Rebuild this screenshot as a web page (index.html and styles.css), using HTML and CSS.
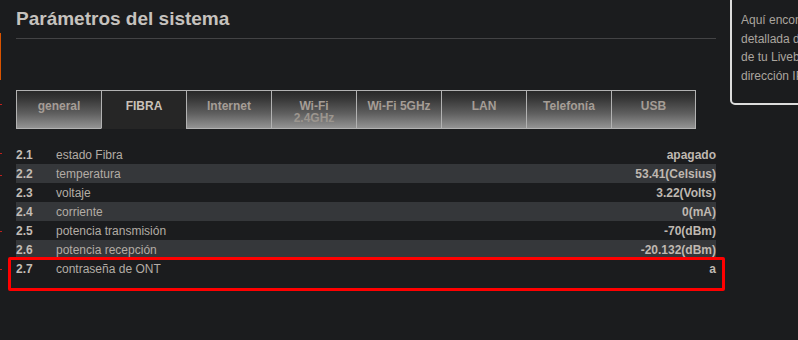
FILE: index.html
```html
<!DOCTYPE html>
<html>
  <head>
    <meta charset="UTF-8">
    <title>Parámetros del sistema</title>
    <link rel="stylesheet" href="styles.css">
  </head>
  <body>
    <div class="edge">
      <div class="edge-bar"></div>
      <div class="tick" style="top: 104px"></div>
      <div class="tick" style="top: 153px"></div>
      <div class="tick" style="top: 175px"></div>
      <div class="tick" style="top: 231px"></div>
      <div class="tick" style="top: 269px"></div>
    </div>

    <div class="page">
      <div class="main">
        <h1>Parámetros del sistema</h1>

        <div class="tabs">
          <div class="tab">general</div>
          <div class="tab active">FIBRA</div>
          <div class="tab">Internet</div>
          <div class="tab">Wi-Fi<br><span class="sub">2.4GHz</span></div>
          <div class="tab">Wi-Fi 5GHz</div>
          <div class="tab">LAN</div>
          <div class="tab">Telefonía</div>
          <div class="tab last">USB</div>
        </div>

        <div class="params">
          <div class="row"><span class="num">2.1</span><span class="label">estado Fibra</span><span class="value">apagado</span></div>
          <div class="row alt"><span class="num">2.2</span><span class="label">temperatura</span><span class="value">53.41(Celsius)</span></div>
          <div class="row"><span class="num">2.3</span><span class="label">voltaje</span><span class="value">3.22(Volts)</span></div>
          <div class="row alt"><span class="num">2.4</span><span class="label">corriente</span><span class="value">0(mA)</span></div>
          <div class="row"><span class="num">2.5</span><span class="label">potencia transmisión</span><span class="value">-70(dBm)</span></div>
          <div class="row alt"><span class="num">2.6</span><span class="label">potencia recepción</span><span class="value">-20.132(dBm)</span></div>
          <div class="row marked"><span class="num">2.7</span><span class="label">contraseña de ONT</span><span class="value">a</span>
            <div class="highlight"></div>
          </div>
        </div>
      </div>

      <div class="sidebar">
        <p>Aquí encontrarás la información<br>detallada de la conexión de fibra<br>de tu Livebox, como la potencia o la<br>dirección IP de tu conexión.</p>
      </div>
    </div>
  </body>
</html>
```

FILE: styles.css
```css
body {
  margin: 0;
  background-color: #1b1c1e;
  font-family: "Liberation Sans", Arial, sans-serif;
  overflow: hidden;
  height: 340px;
  position: relative;
}

.edge {
  position: absolute;
  left: 0;
  top: 0;
}

.edge-bar {
  position: absolute;
  left: 0;
  top: 33px;
  width: 1px;
  height: 47px;
  background-color: #d95300;
}

.tick {
  position: absolute;
  left: 0;
  width: 2px;
  height: 1px;
  background-color: #c0201c;
}

.page {
  display: flex;
  flex-direction: row;
}

.main {
  width: 700px;
  margin-left: 16px;
  flex-shrink: 0;
}

h1 {
  margin: 8px 0 0 0;
  padding-bottom: 8px;
  font-size: 19px;
  line-height: 22px;
  font-weight: bold;
  color: #c6c2be;
  border-bottom: 1px solid #434345;
}

.tabs {
  display: flex;
  flex-direction: row;
  margin-top: 51px;
}

.tab {
  width: 85px;
  height: 39px;
  box-sizing: border-box;
  border-top: 1px solid #b2b2b2;
  border-bottom: 1px solid #b2b2b2;
  border-left: 1px solid #b2b2b2;
  background: linear-gradient(to bottom, #282828 0%, #363636 20%, #5e5e5e 60%, #939393 100%);
  color: #a59d96;
  font-size: 12px;
  font-weight: bold;
  line-height: 12px;
  text-align: center;
  padding-top: 9px;
}

.tab .sub {
  color: #9c968f;
}

.tab.active {
  background: #262626;
  border-bottom-color: #262626;
  color: #c9c1b9;
}

.tab.last {
  border-right: 1px solid #b2b2b2;
}

.params {
  margin-top: 16px;
}

.row {
  display: flex;
  flex-direction: row;
  height: 19px;
  line-height: 20px;
  font-size: 12px;
  color: #b3aca5;
  position: relative;
}

.row.alt {
  background-color: #35373a;
}

.num {
  width: 40px;
  font-weight: bold;
  color: #c2bcb6;
}

.label {
  flex: 1;
}

.value {
  font-weight: bold;
  color: #bfb8b1;
}

.highlight {
  position: absolute;
  left: -8px;
  top: -2px;
  width: 711px;
  height: 28px;
  border: 3px solid #ff0000;
  border-radius: 2px;
}

.sidebar {
  margin-left: 14px;
  margin-top: -10px;
  width: 240px;
  height: 115px;
  box-sizing: border-box;
  flex-shrink: 0;
  border: 2px solid #dcdcdc;
  border-radius: 0 0 5px 5px;
  padding: 19px 0 0 9px;
}

.sidebar p {
  margin: 0;
  font-size: 12px;
  line-height: 18.5px;
  color: #aba59f;
  white-space: nowrap;
}
```
